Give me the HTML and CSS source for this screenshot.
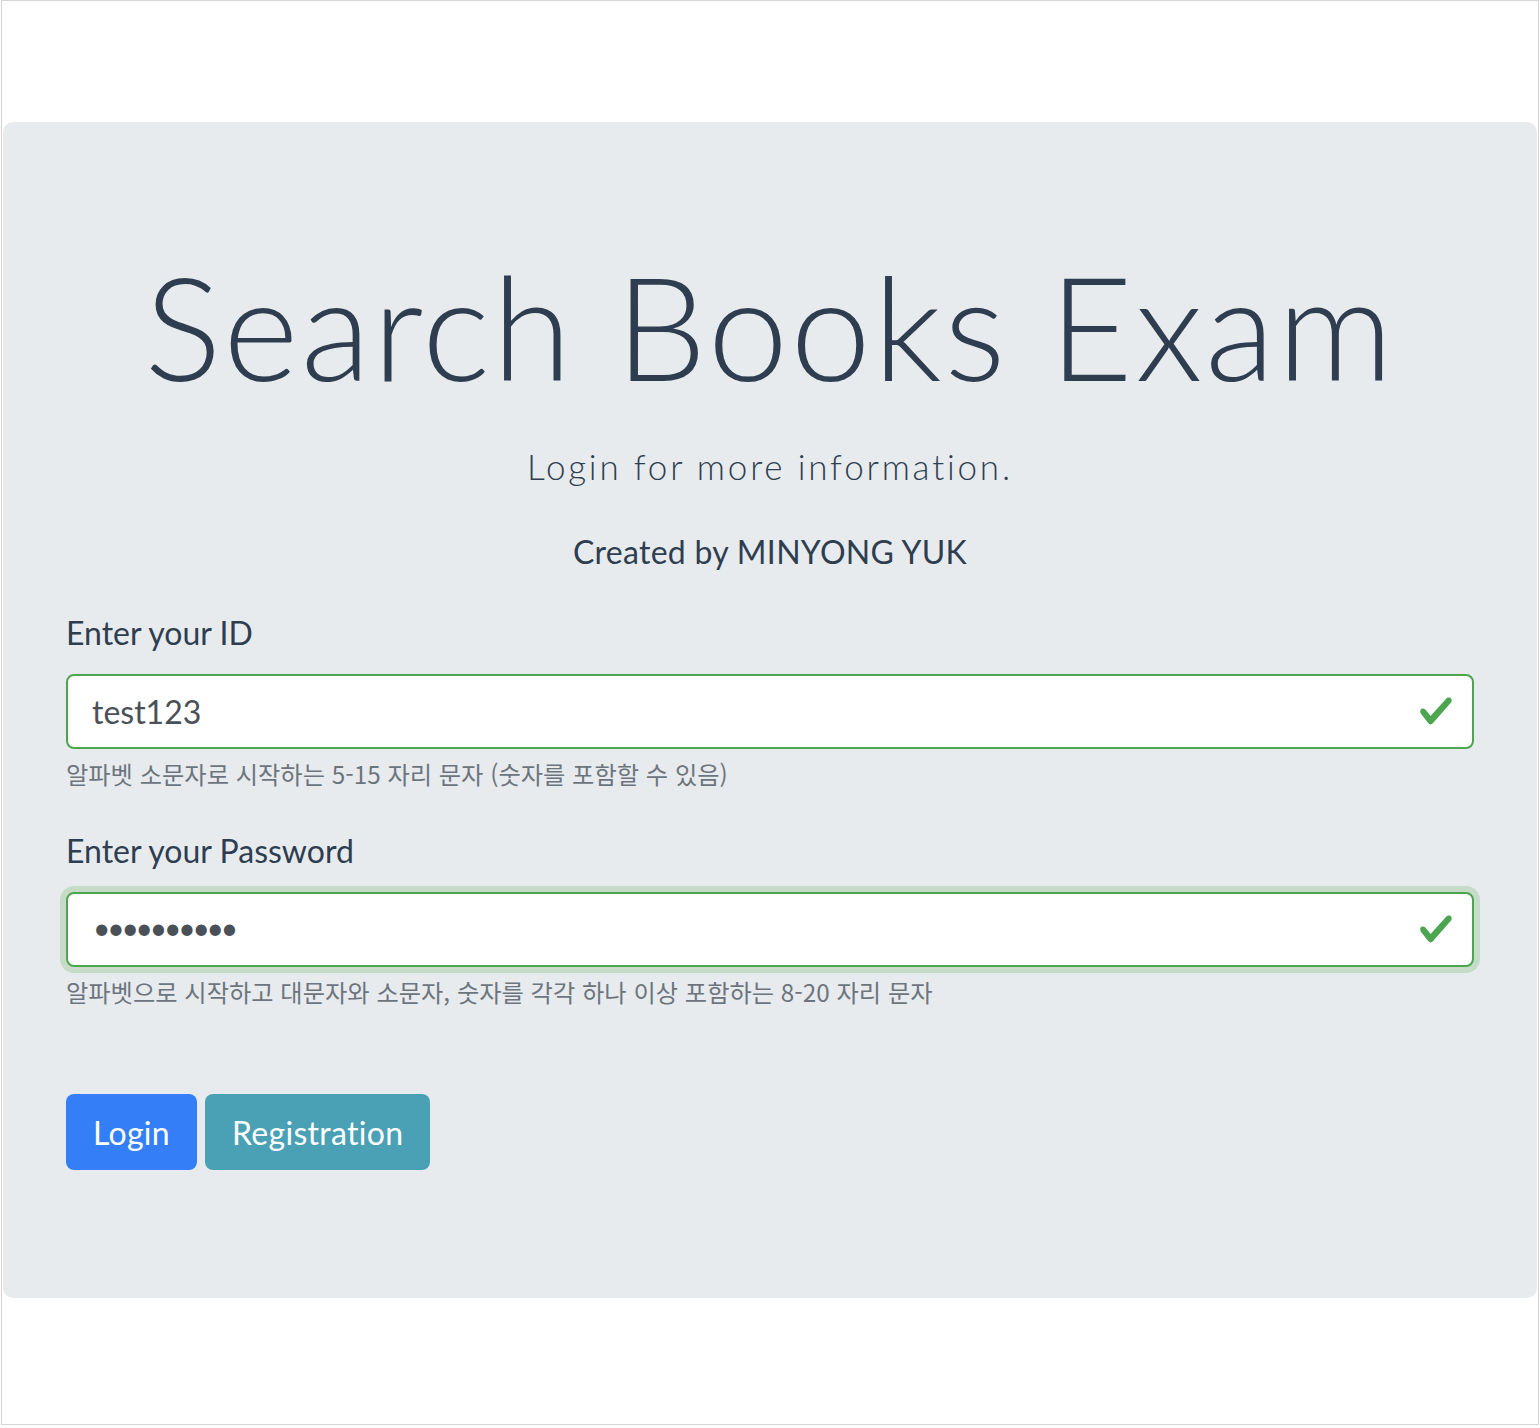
FILE: index.html
```html
<!DOCTYPE html>
<html lang="ko">
<head>
<meta charset="utf-8">
<title>Search Books Exam</title>
<link rel="stylesheet" href="styles.css">
</head>
<body>
<div class="frame">
  <div class="jumbotron">
    <h1 class="title">Search Books Exam</h1>
    <p class="lead">Login for more information.</p>
    <p class="credit">Created by MINYONG YUK</p>
    <form class="login-form">
      <div class="form-group">
        <label class="form-label" for="uid">Enter your ID</label>
        <div class="input-wrap">
          <input id="uid" class="form-control" type="text" value="test123">
          <svg class="valid-icon" viewBox="0 0 8 8" aria-hidden="true"><path d="M2.3 6.73L.6 4.53c-.4-1.04.46-1.4 1.1-.8l1.1 1.4 3.4-3.8c.6-.63 1.6-.27 1.2.7l-4 4.6c-.43.5-.8.4-1.1.1z"/></svg>
        </div>
        <small class="form-text">알파벳 소문자로 시작하는 5-15 자리 문자 (숫자를 포함할 수 있음)</small>
      </div>
      <div class="form-group">
        <label class="form-label" for="upw">Enter your Password</label>
        <div class="input-wrap">
          <input id="upw" class="form-control focused password" type="password" value="Test12345!">
          <svg class="valid-icon" viewBox="0 0 8 8" aria-hidden="true"><path d="M2.3 6.73L.6 4.53c-.4-1.04.46-1.4 1.1-.8l1.1 1.4 3.4-3.8c.6-.63 1.6-.27 1.2.7l-4 4.6c-.43.5-.8.4-1.1.1z"/></svg>
        </div>
        <small class="form-text">알파벳으로 시작하고 대문자와 소문자, 숫자를 각각 하나 이상 포함하는 8-20 자리 문자</small>
      </div>
      <div class="btn-row">
        <button type="button" class="btn btn-primary">Login</button>
        <button type="button" class="btn btn-info">Registration</button>
      </div>
    </form>
  </div>
</div>
</body>
</html>
```
FILE: styles.css
```css
html, body {
  margin: 0;
  padding: 0;
  background: #ffffff;
}

body {
  font-family: "Lato", "Noto Sans CJK KR", sans-serif;
  color: #2e3e50;
}

.frame {
  box-sizing: border-box;
  width: 1538px;
  height: 1425px;
  margin-left: 1px;
  border: 1px solid #d4d4d4;
  padding: 121px 1px 0 1px;
}

.jumbotron {
  box-sizing: border-box;
  height: 1176px;
  background: #e8ebee;
  border-radius: 10px;
  padding: 118px 63px 0 63px;
}

.title {
  margin: 0 0 27px;
  font-size: 144px;
  font-weight: 300;
  line-height: 1.2;
  letter-spacing: 2.4px;
  text-align: center;
  color: #2e3e50;
}

.lead {
  margin: 0 0 36px;
  font-size: 35px;
  font-weight: 300;
  line-height: 52.5px;
  letter-spacing: 2.8px;
  text-align: center;
}

.credit {
  margin: 0 0 33px;
  font-size: 32px;
  font-weight: 400;
  line-height: 48px;
  letter-spacing: 0.3px;
  text-align: center;
}

.login-form {
  display: flex;
  flex-direction: column;
}

.form-group {
  display: flex;
  flex-direction: column;
  margin-bottom: 35px;
}

.form-label {
  font-size: 32px;
  line-height: 48px;
  margin-bottom: 17px;
}

.input-wrap {
  position: relative;
}

.form-control {
  display: block;
  box-sizing: border-box;
  width: 100%;
  height: 75px;
  margin: 0;
  padding: 0 76px 0 24px;
  font-family: "Lato", sans-serif;
  font-size: 32px;
  color: #495057;
  background: #ffffff;
  border: 2px solid #4ca64f;
  border-radius: 8px;
  outline: none;
}

.form-control.focused {
  box-shadow: 0 0 0 6px #c6dcc9;
}

.form-control.password {
  font-size: 30px;
  letter-spacing: -3.2px;
  padding-left: 25px;
  padding-bottom: 6px;
}

.valid-icon {
  position: absolute;
  top: 19px;
  right: 20px;
  width: 36px;
  height: 36px;
  fill: #4ca64f;
}

.form-text {
  display: block;
  margin-top: 7px;
  font-family: "Noto Sans CJK KR", sans-serif;
  font-size: 24.25px;
  line-height: 36px;
  color: #6c757d;
}

.btn-row {
  display: flex;
  gap: 8px;
  margin-top: 49px;
}

.btn {
  height: 76px;
  padding: 0 27px;
  font-family: "Lato", sans-serif;
  font-size: 32px;
  letter-spacing: 0.3px;
  color: #ffffff;
  border: none;
  border-radius: 8px;
}

.btn-primary {
  background: #347ff8;
}

.btn-info {
  background: #4aa0b5;
}
```
